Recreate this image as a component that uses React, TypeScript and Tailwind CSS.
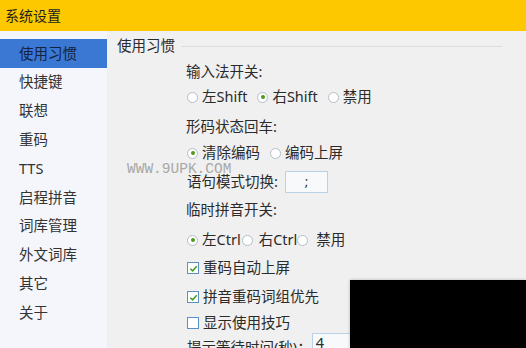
import type { ReactNode } from 'react'

const NAV_ITEMS = ['使用习惯', '快捷键', '联想', '重码', 'TTS', '启程拼音', '词库管理', '外文词库', '其它', '关于']

const FONT = "font-['Noto_Sans','Noto_Sans_CJK_SC',sans-serif]"

type RadioProps = { checked?: boolean; label: string; gapAfter?: string; labelGap?: string }

function Radio({ checked, label, gapAfter = 'mr-[10px]', labelGap = 'ml-[4px]' }: RadioProps) {
  return (
    <span className={`flex items-center ${gapAfter}`}>
      <span className="flex size-[11px] items-center justify-center rounded-full border border-[#b4bcc8] bg-white">
        {checked && <span className="size-[4px] rounded-full bg-[#4f9a1c]" />}
      </span>
      <span className={labelGap}>{label}</span>
    </span>
  )
}

function Checkbox({ checked, label }: { checked?: boolean; label: string }) {
  return (
    <span className="flex items-center">
      <span className="flex size-[12px] items-center justify-center border border-[#5a8fc6] bg-white">
        {checked && (
          <svg viewBox="0 0 10 10" className="size-[9px]">
            <path d="M1.5 5.2 L4 7.6 L8.6 2.4" fill="none" stroke="#3f9a1a" strokeWidth="1.6" />
          </svg>
        )}
      </span>
      <span className="ml-[4px]">{label}</span>
    </span>
  )
}

function Row({ className, children }: { className: string; children: ReactNode }) {
  return <div className={`flex h-[20px] items-center pl-[79px] ${className}`}>{children}</div>
}

export default function App() {
  return (
    <div className={`relative h-[348px] w-[526px] overflow-hidden bg-[#f0f0f0] text-[14.5px] text-[#2b2b2b] ${FONT}`}>
      {/* 标题栏 */}
      <div className="flex h-[31px] items-center bg-[#fdc800] pl-[5px] text-[14px] text-[#1e1e1e]">系统设置</div>

      <div className="flex h-[317px]">
        {/* 左侧导航 */}
        <ul className="w-[107px] shrink-0 bg-[#f4f6fb] pt-[8px]">
          {NAV_ITEMS.map((item, i) => (
            <li
              key={item}
              className={`flex h-[28.8px] items-center pl-[19px] ${i === 0 ? 'bg-[#3b78d4] text-[#14243f]' : 'text-[#333]'}`}
            >
              {item}
            </li>
          ))}
        </ul>

        {/* 设置内容 */}
        <div className="flex flex-1 flex-col">
          <div className="mt-[5px] flex h-[20px] items-center pl-[10px]">
            <span>使用习惯</span>
            <span className="ml-[6px] mr-[24px] h-px flex-1 bg-[#dedede]" />
          </div>

          <Row className="mt-[6px]">输入法开关:</Row>
          <Row className="mt-[5px] pl-[80px]">
            <Radio label="左Shift" />
            <Radio checked label="右Shift" />
            <Radio label="禁用" />
          </Row>
          <Row className="mt-[10px]">形码状态回车:</Row>
          <Row className="mt-[6px] pl-[80px]">
            <Radio checked label="清除编码" />
            <Radio label="编码上屏" />
          </Row>
          <div className="mt-[8px] flex h-[22px] items-center pl-[80px]">
            <span>语句模式切换:</span>
            <span className="ml-[7px] flex h-[22px] w-[43px] items-center justify-center border border-[#b9d2ea] bg-[#f7f9fb] text-[13px]">
              ;
            </span>
          </div>
          <Row className="mt-[7px]">临时拼音开关:</Row>
          <Row className="mt-[10px] pl-[80px]">
            <Radio checked label="左Ctrl" gapAfter="mr-[1px]" />
            <Radio label="右Ctrl" gapAfter="mr-0" labelGap="ml-[6px]" />
            <Radio label="禁用" labelGap="ml-[8px]" />
          </Row>
          <Row className="mt-[8px] pl-[80px]">
            <Checkbox checked label="重码自动上屏" />
          </Row>
          <Row className="mt-[9px] pl-[80px]">
            <Checkbox checked label="拼音重码词组优先" />
          </Row>
          <Row className="mt-[6px] pl-[80px]">
            <Checkbox label="显示使用技巧" />
          </Row>
          <div className="flex h-[22px] items-start pl-[80px]">
            <span className="pt-[4px]">提示等待时间(秒)：</span>
            <span className="flex h-[22px] w-[60px] items-end border border-[#b9d2ea] bg-[#f7f9fb] pl-[3px]">4</span>
          </div>
        </div>
      </div>

      {/* 水印 */}
      <span className="pointer-events-none absolute left-[127px] top-[159px] font-['Liberation_Mono',monospace] text-[14.5px] text-[#a8a8a8]">
        WWW.9UPK.COM
      </span>

      {/* 遮挡块 */}
      <div className="absolute bottom-0 left-[350px] right-0 top-[280px] bg-black shadow-[0_0_3px_rgba(0,0,0,0.25)]" />
    </div>
  )
}
